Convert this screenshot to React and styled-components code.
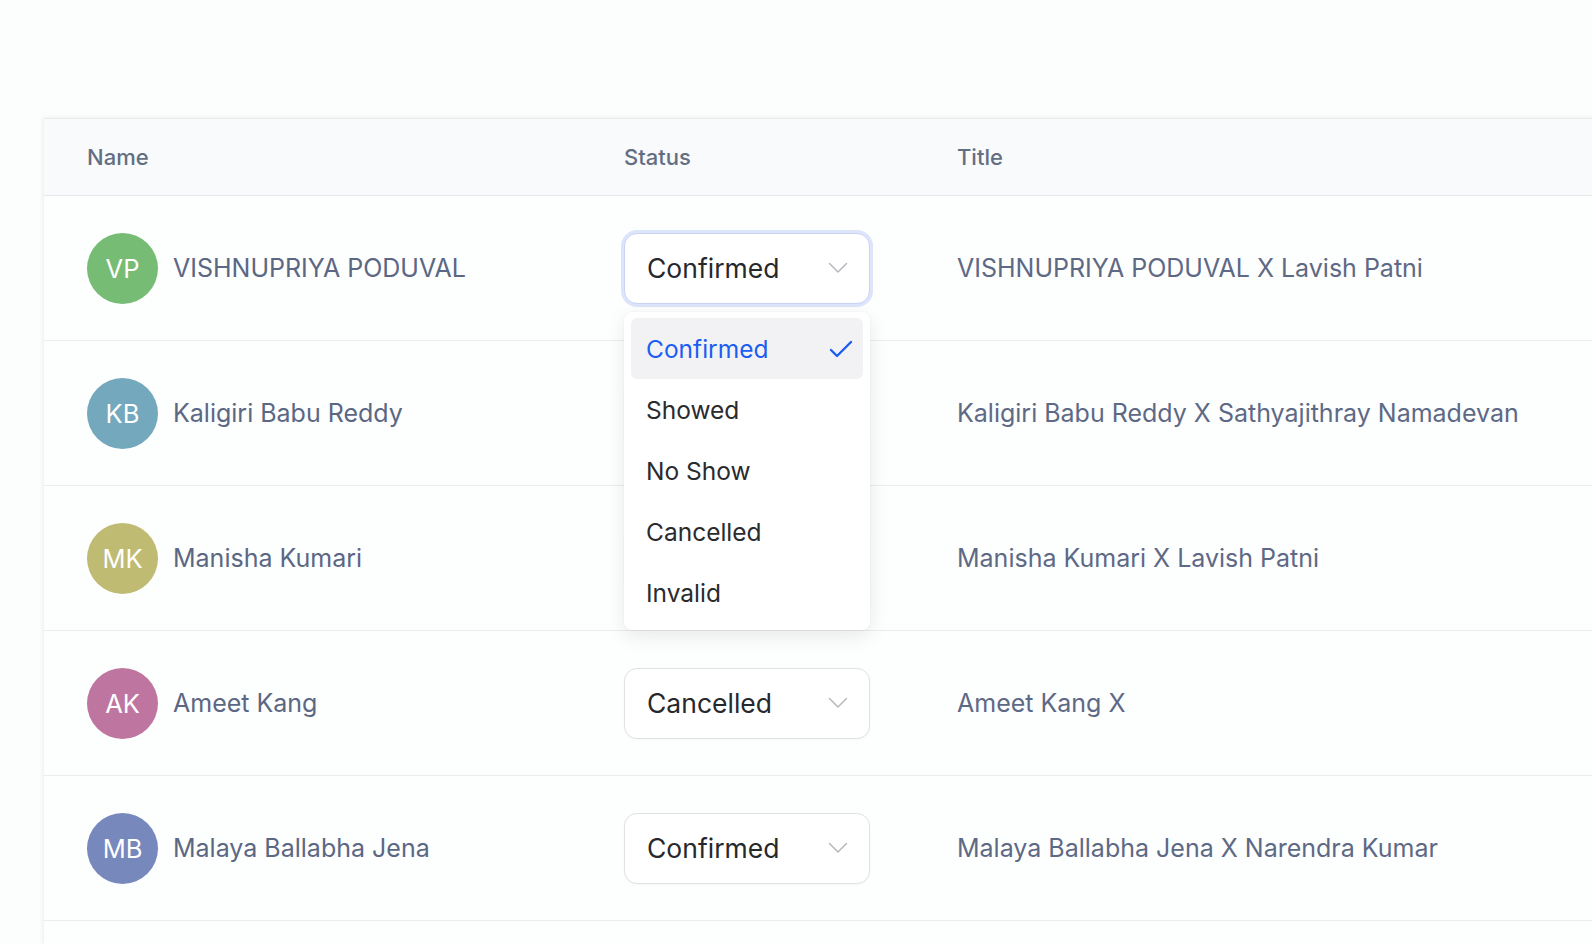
import styled, { createGlobalStyle } from 'styled-components';

const GlobalStyle = createGlobalStyle`
  html, body {
    margin: 0;
    padding: 0;
    background: #fcfdfd;
    font-family: Inter, 'Noto Sans', sans-serif;
    overflow: hidden;
  }
`;

const Page = styled.div`
  padding: 118px 0 0 44px;
  height: 944px;
  box-sizing: border-box;
  overflow: hidden;
`;

const Card = styled.div`
  width: 1600px;
  height: 100%;
  background: #fdfefe;
  border-top: 1px solid #e9eaee;
  box-shadow: -1px 0 5px rgba(0, 0, 0, 0.07);
`;

const Row = styled.div`
  display: grid;
  grid-template-columns: 537px 333px 1fr;
  align-items: center;
  height: ${(p) => (p.$head ? '76px' : '144px')};
  background: ${(p) => (p.$head ? '#f9fafb' : 'transparent')};
  border-bottom: 1px solid ${(p) => (p.$head ? '#e6e7ec' : '#ececef')};
`;

const Cell = styled.div`
  padding-left: 43px;
  display: flex;
  align-items: center;
  position: relative;
`;

const HeadText = styled.span`
  font-size: 22px;
  font-weight: 500;
  color: #636e83;
`;

const Avatar = styled.div`
  width: 71px;
  height: 71px;
  border-radius: 50%;
  background: ${(p) => p.$color};
  color: #fff;
  font-size: 25.5px;
  display: flex;
  align-items: center;
  justify-content: center;
  flex-shrink: 0;
`;

const NameText = styled.span`
  margin-left: 15px;
  font-size: 25px;
  color: #5b6783;
  white-space: nowrap;
`;

const TitleText = styled.span`
  font-size: 25px;
  color: #5d6985;
  white-space: nowrap;
`;

const SelectBox = styled.div`
  width: 246px;
  height: 71px;
  box-sizing: border-box;
  border-radius: 13px;
  border: 1px solid ${(p) => (p.$open ? '#c9d4f4' : '#e1e1e6')};
  box-shadow: ${(p) => (p.$open ? '0 0 0 3px #dde5fa' : '0 1px 2px rgba(0,0,0,0.03)')};
  background: #fff;
  display: flex;
  align-items: center;
  justify-content: space-between;
  padding: 0 21px 0 22px;
  font-size: 26.5px;
  color: #26282c;
`;

const Menu = styled.div`
  position: absolute;
  left: 43px;
  top: calc(50% + 44px);
  width: 246px;
  box-sizing: border-box;
  padding: 6px 7px 7px;
  background: #fff;
  border-radius: 8px;
  box-shadow: 0 6px 20px rgba(0, 0, 0, 0.09), 0 0 2px rgba(0, 0, 0, 0.06);
  z-index: 5;
`;

const Item = styled.div`
  height: 61px;
  display: flex;
  align-items: center;
  justify-content: space-between;
  padding: 0 10px 0 15px;
  border-radius: 6px;
  font-size: 24.5px;
  color: ${(p) => (p.$active ? '#1c5df2' : '#2a2b2f')};
  background: ${(p) => (p.$active ? '#f2f2f4' : 'transparent')};
`;

const Chevron = () => (
  <svg width="20" height="12" viewBox="0 0 20 12" fill="none">
    <polyline points="1.5,1.5 10,10 18.5,1.5" stroke="#b8b8bc" strokeWidth="1.5" strokeLinecap="round" strokeLinejoin="round" />
  </svg>
);

const Check = () => (
  <svg width="24" height="18" viewBox="0 0 24 18" fill="none">
    <polyline points="2,10 8,16 22,2" stroke="#1c5df2" strokeWidth="2.4" strokeLinecap="round" strokeLinejoin="round" />
  </svg>
);

const OPTIONS = ['Confirmed', 'Showed', 'No Show', 'Cancelled', 'Invalid'];

const people = [
  { initials: 'VP', name: 'VISHNUPRIYA PODUVAL', color: '#77bc74', status: 'Confirmed', title: 'VISHNUPRIYA PODUVAL X Lavish Patni', open: true },
  { initials: 'KB', name: 'Kaligiri Babu Reddy', color: '#74a8bc', status: 'Showed', title: 'Kaligiri Babu Reddy X Sathyajithray Namadevan' },
  { initials: 'MK', name: 'Manisha Kumari', color: '#bfbb73', status: 'Confirmed', title: 'Manisha Kumari X Lavish Patni' },
  { initials: 'AK', name: 'Ameet Kang', color: '#be76a1', status: 'Cancelled', title: 'Ameet Kang X' },
  { initials: 'MB', name: 'Malaya Ballabha Jena', color: '#7688bc', status: 'Confirmed', title: 'Malaya Ballabha Jena X Narendra Kumar' },
];

export default function App() {
  return (
    <Page>
      <GlobalStyle />
      <Card>
        <Row $head>
          <Cell><HeadText>Name</HeadText></Cell>
          <Cell><HeadText>Status</HeadText></Cell>
          <Cell><HeadText>Title</HeadText></Cell>
        </Row>
        {people.map((p) => (
          <Row key={p.initials}>
            <Cell>
              <Avatar $color={p.color}>{p.initials}</Avatar>
              <NameText>{p.name}</NameText>
            </Cell>
            <Cell>
              <SelectBox $open={p.open}>
                {p.status}
                <Chevron />
              </SelectBox>
              {p.open && (
                <Menu>
                  {OPTIONS.map((o) => (
                    <Item key={o} $active={o === p.status}>
                      {o}
                      {o === p.status && <Check />}
                    </Item>
                  ))}
                </Menu>
              )}
            </Cell>
            <Cell><TitleText>{p.title}</TitleText></Cell>
          </Row>
        ))}
      </Card>
    </Page>
  );
}
